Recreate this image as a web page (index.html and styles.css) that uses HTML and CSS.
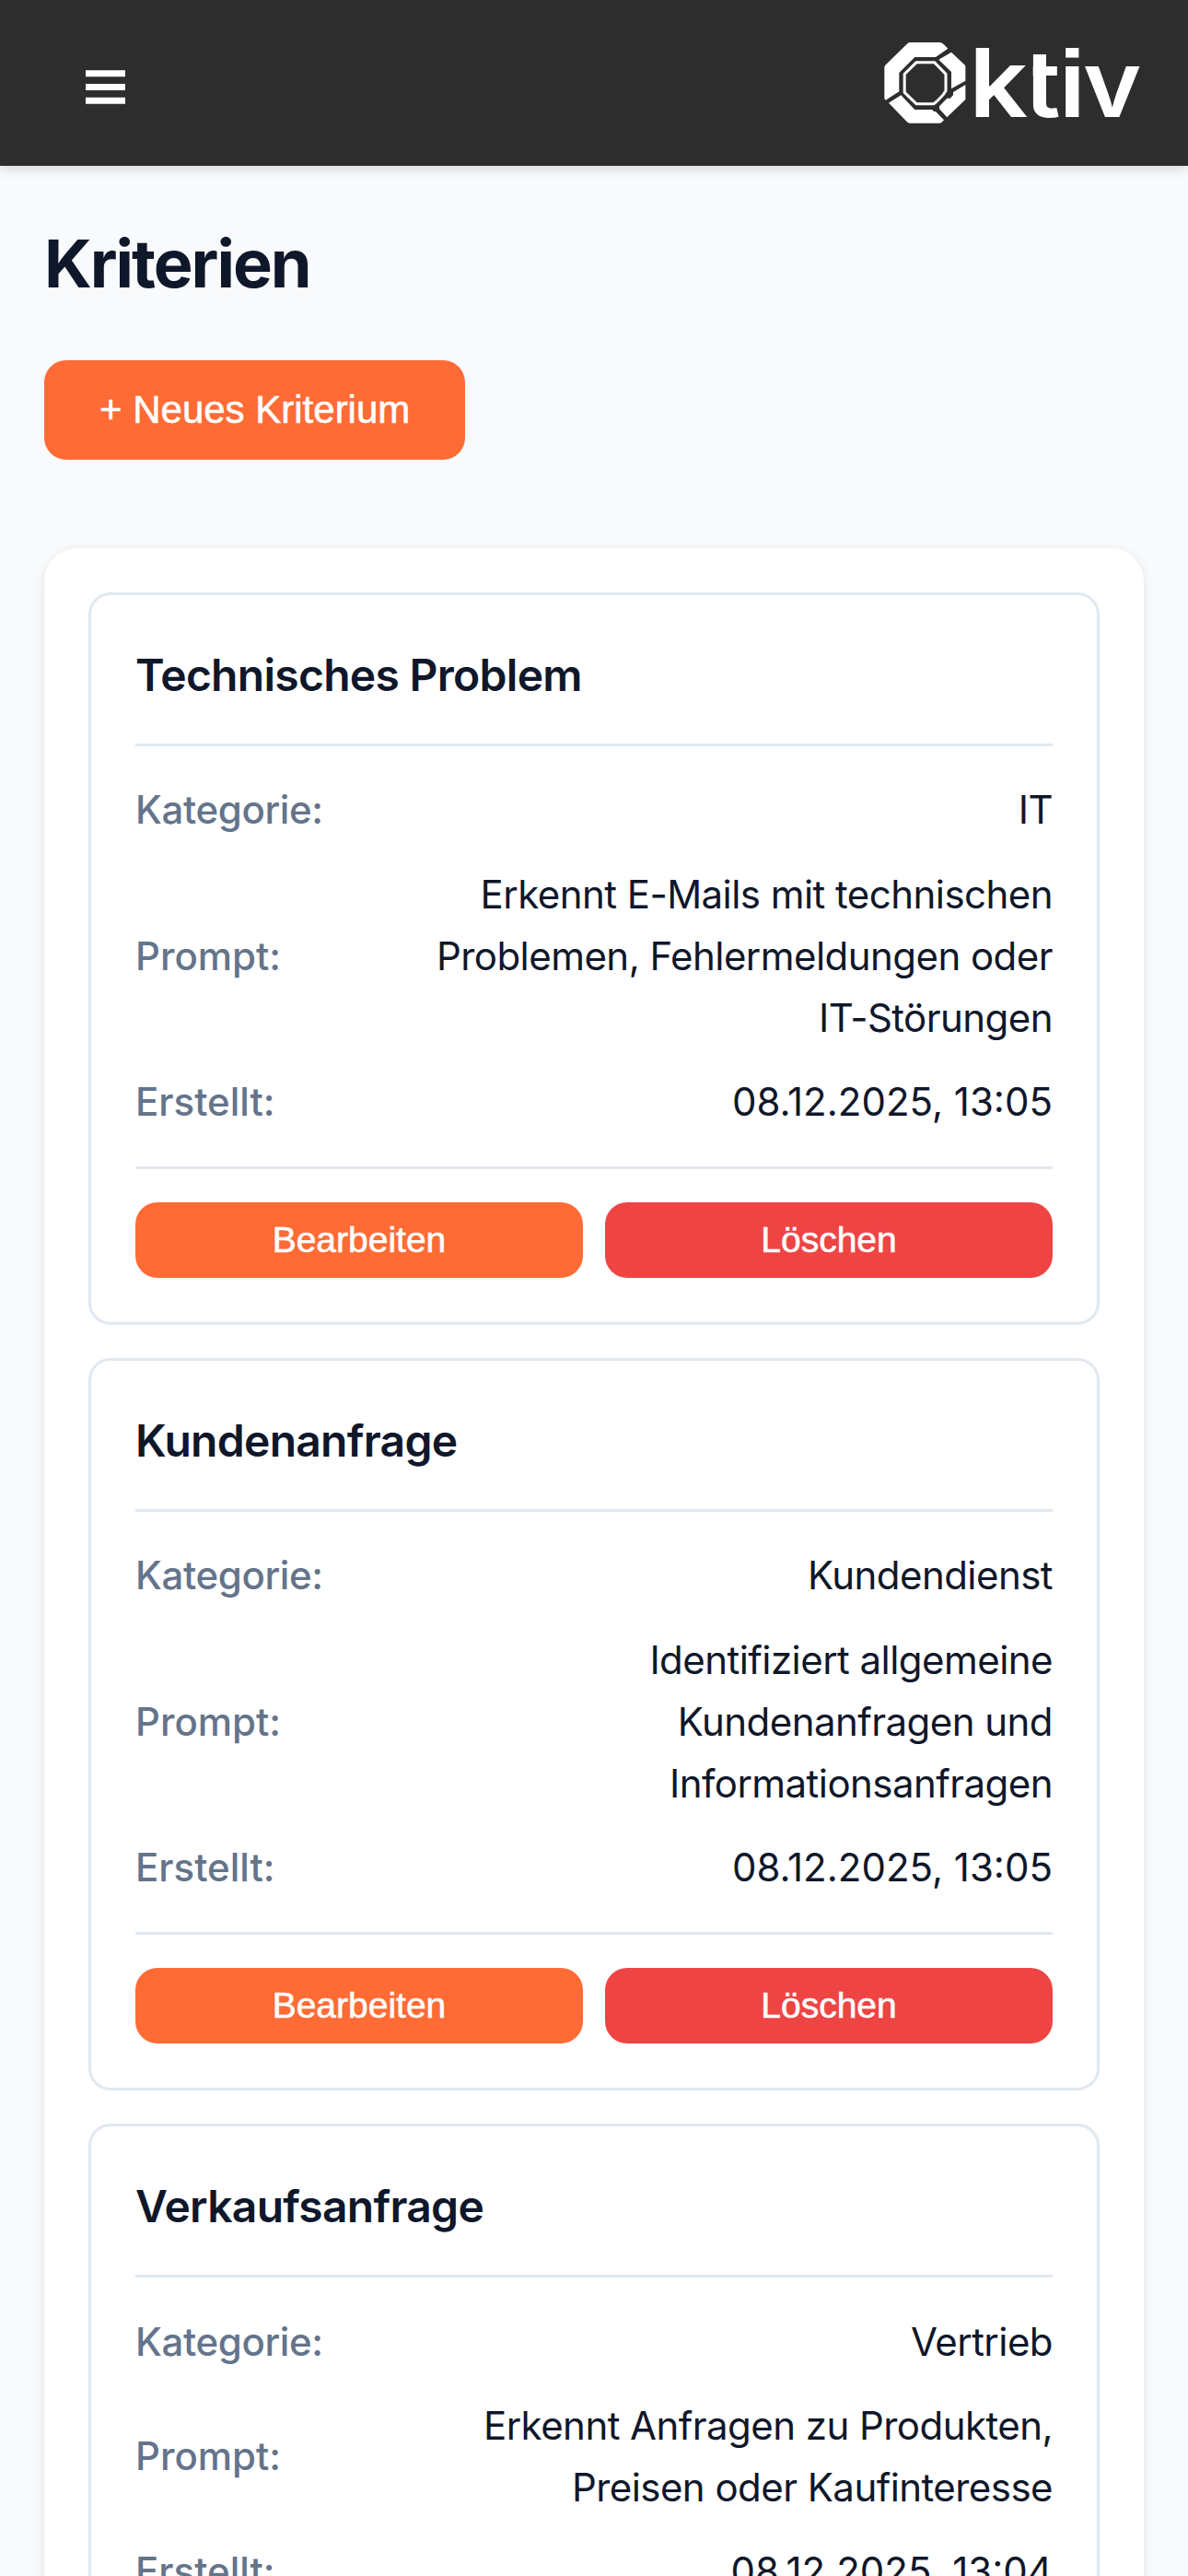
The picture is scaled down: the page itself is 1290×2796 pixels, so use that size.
FILE: index.html
```html
<!DOCTYPE html>
<html lang="de">
<head>
<meta charset="utf-8">
<title>Kriterien</title>
<link rel="stylesheet" href="styles.css">
</head>
<body>
<header class="topbar">
  <button class="menu" aria-label="Menü">
    <svg class="menu-icon" viewBox="0 0 43 37"><path d="M0 .3h43v7H0zM0 15h43v7H0zM0 29.8h43v7H0z" fill="#fff"/></svg>
  </button>
  <svg class="logo" viewBox="60 75 840 270" role="img" aria-label="Oktiv">
    <clipPath id="t-stem"><path d="M545 80H640V340H545Z"/></clipPath>
    <g fill="#fff">
      <path d="M145 78H240Q248 78 253 83L268 98 228 126H160L109 177V238L65 266 61 261V160Q61 156 64 152L136 82Q140 78 145 78Z"/>
      <path d="M279 110L322 151Q325 154 325 158V203L279 229V174L238 134Z"/>
      <path d="M325 216V264L265 322 240 295V286L265 260H275L285 250V240Z"/>
      <path d="M115 250L160 297H217L222 303H228L255 331 248 338Q244 341 240 341H145Q140 341 136 338L75 275Z"/>
      <path d="M165 143.5H224L261 181V236L253 248 232 270 222 278H165L126.500 241V181Z" fill="none" stroke="#fff" stroke-width="9"/>
      <text class="logo-text" transform="translate(336.500 321) scale(1.12 1.025)">k</text>
      <g clip-path="url(#t-stem)"><text class="logo-text" transform="translate(516 321) scale(1.12 1)">t</text></g>
      <text class="logo-text logo-i" transform="translate(630 321)">i</text>
      <text class="logo-text" transform="translate(708 321) scale(1.08 1)">v</text>
    </g>
  </svg>
</header>
<main class="page">
  <h1 class="page-title">Kriterien</h1>
  <button class="btn btn-new">+ Neues Kriterium</button>
  <section class="panel">
    <article class="card">
      <h2 class="card-title">Technisches Problem</h2>
      <dl class="fields">
        <div class="row"><dt class="wide">Kategorie:</dt><dd>IT</dd></div>
        <div class="row"><dt>Prompt:</dt><dd>Erkennt E-Mails mit technischen Problemen, Fehlermeldungen oder IT-Störungen</dd></div>
        <div class="row"><dt>Erstellt:</dt><dd class="date">08.12.2025, 13:05</dd></div>
      </dl>
      <div class="actions"><button class="btn btn-edit">Bearbeiten</button><button class="btn btn-delete">Löschen</button></div>
    </article>
    <article class="card">
      <h2 class="card-title">Kundenanfrage</h2>
      <dl class="fields">
        <div class="row"><dt class="wide">Kategorie:</dt><dd>Kundendienst</dd></div>
        <div class="row"><dt>Prompt:</dt><dd>Identifiziert allgemeine Kundenanfragen und Informationsanfragen</dd></div>
        <div class="row"><dt>Erstellt:</dt><dd class="date">08.12.2025, 13:05</dd></div>
      </dl>
      <div class="actions"><button class="btn btn-edit">Bearbeiten</button><button class="btn btn-delete">Löschen</button></div>
    </article>
    <article class="card">
      <h2 class="card-title">Verkaufsanfrage</h2>
      <dl class="fields">
        <div class="row"><dt class="wide">Kategorie:</dt><dd>Vertrieb</dd></div>
        <div class="row"><dt>Prompt:</dt><dd>Erkennt Anfragen zu Produkten, Preisen oder Kaufinteresse</dd></div>
        <div class="row"><dt>Erstellt:</dt><dd class="date">08.12.2025, 13:04</dd></div>
      </dl>
      <div class="actions"><button class="btn btn-edit">Bearbeiten</button><button class="btn btn-delete">Löschen</button></div>
    </article>
  </section>
</main>
</body>
</html>
```
FILE: styles.css
```css
* { box-sizing: border-box; margin: 0; padding: 0; }

body {
  height: 2796px;
  overflow: hidden;
  background: #f8fafc;
  color: #0f172a;
  font-family: Inter, "Liberation Sans", sans-serif;
  font-size: 42px;
  line-height: 1.6;
}

.topbar {
  display: flex;
  align-items: center;
  justify-content: space-between;
  height: 180px;
  padding: 0 50px 0 93px;
  background: #2d2d2d;
  box-shadow: 0 3px 12px rgba(0, 0, 0, 0.15);
}
.menu { display: block; margin-top: 9px; border: 0; background: none; }
.menu-icon { display: block; width: 43px; height: 37px; }
.logo { display: block; width: 280px; height: 90px; }
.logo-text { font-family: Inter, sans-serif; font-weight: 600; font-size: 300px; }
.logo-i { font-family: "Liberation Sans", sans-serif; font-weight: 700; font-size: 309px; }

.page { padding: 48px; }
.page-title { font-size: 72px; font-weight: 700; letter-spacing: -0.028em; }

.btn {
  border: 0;
  border-radius: 24px;
  color: #fff;
  font-family: "Liberation Sans", Arial, sans-serif;
  background: #ff6b35;
  -webkit-text-stroke: 0.6px #fff;
}
.btn-new {
  display: block;
  height: 108px;
  margin-top: 48px;
  padding: 0 60px;
  font-size: 42px;
}

.panel {
  display: flex;
  flex-direction: column;
  gap: 36px;
  margin-top: 96px;
  padding: 48px;
  border-radius: 36px;
  background: #fff;
  box-shadow: 0 3px 12px rgba(0, 0, 0, 0.1);
}
.card {
  padding: 48px;
  border: 3px solid #e2e8f0;
  border-radius: 24px;
}
.card-title {
  padding: 1px 0 35px;
  border-bottom: 3px solid #e2e8f0;
  font-size: 48px;
  font-weight: 600;
  letter-spacing: -0.015em;
}
.fields { padding: 24px 0; }
.row {
  display: flex;
  align-items: center;
  justify-content: space-between;
  padding: 11.4px 0 12.6px;
}
.row dt { color: #64748b; font-weight: 500; }
.row .wide { letter-spacing: -0.009em; }
.row dd { max-width: 697px; text-align: right; letter-spacing: -0.013em; }
.row .date { letter-spacing: 0; }
.actions {
  display: flex;
  gap: 24px;
  padding-top: 36px;
  border-top: 3px solid #e2e8f0;
}
.btn-edit, .btn-delete { flex: 1; height: 82.4px; font-size: 39px; }
.btn-delete { background: #ef4444; }
```
